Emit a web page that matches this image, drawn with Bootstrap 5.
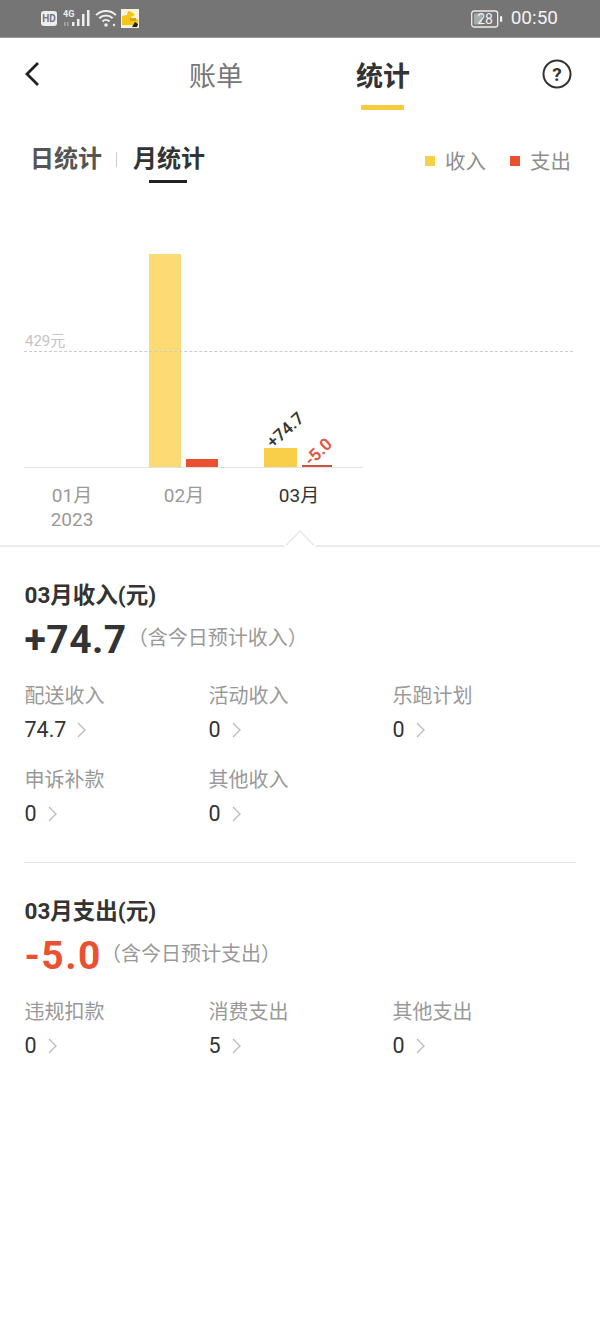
<!DOCTYPE html>
<html>
<head>
<meta charset="utf-8">
<title>统计</title>
<link href="https://cdn.jsdelivr.net/npm/bootstrap@5.3.2/dist/css/bootstrap.min.css" rel="stylesheet" />
<script src="https://cdn.jsdelivr.net/npm/bootstrap@5.3.2/dist/js/bootstrap.bundle.min.js"></script>
<style>
  body{
    font-family: Roboto, "Noto Sans CJK SC", sans-serif;
    color: #333;
    background: #fff;
  }
  .phone-bar{
    height: 38px;
    background: #757575;
    border-bottom: 1px solid #9a9a9a;
    padding: 0 42px 0 41px;
    color: #f2f2f2;
  }
  .hd-tag{
    width: 16px;
    height: 15px;
    background: #eee;
    color: #757575;
    border-radius: 3px;
    font-size: 10px;
    font-weight: 700;
    line-height: 15px;
    text-align: center;
  }
  .clock{
    font-size: 19px;
    margin-left: 8px;
  }
  .top-nav{
    height: 75px;
    padding: 0 28px 4px 24px;
  }
  .top-tabs{
    left: 189px;
    top: 20px;
    gap: 112px;
  }
  .top-tab{
    font-size: 27px;
    line-height: 38px;
    color: #777;
    width: 55px;
    white-space: nowrap;
  }
  .top-tab.is-on{
    color: #333;
    font-weight: 700;
  }
  .top-tab.is-on::after{
    content: "";
    display: block;
    width: 43px;
    height: 5px;
    margin: 9px 0 0 5px;
    background: #f8cb3e;
  }
  .sub-bar{
    height: 107px;
    padding: 30px 29px 0 30px;
  }
  .sub-tab{
    font-size: 24px;
    line-height: 32px;
    font-weight: 700;
    color: #555;
    white-space: nowrap;
  }
  .sub-tab.is-on{
    color: #333;
  }
  .sub-tab.is-on::after{
    content: "";
    display: block;
    width: 38px;
    height: 3px;
    margin: 5px 0 0 16px;
    background: #222;
  }
  .sub-sep{
    width: 1px;
    height: 15px;
    background: #ccc;
    margin: 9px 16px 0 14px;
  }
  .legend-wrap{
    padding-top: 4px;
    gap: 24px;
  }
  .legend-text{
    font-size: 20.5px;
    line-height: 30px;
    color: #8e8e8e;
  }
  .legend-dot{
    width: 10px;
    height: 10px;
    margin-right: 10px;
    margin-top: -3px;
  }
  .bg-income{ background: #f9cf4a; }
  .bg-expense{ background: #ea5130; }
  .chart-box{
    height: 327px;
    border-bottom: 2px solid #ececec;
  }
  .limit-line{
    left: 24px;
    right: 27px;
    top: 131px;
    border-top: 1px dashed #ccc;
  }
  .limit-label{
    left: 25px;
    top: 111px;
    font-size: 15px;
    line-height: 20px;
    color: #c4c4c4;
    background: #fff;
  }
  .plot{
    margin-left: 24px;
    width: 339px;
    height: 248px;
    border-bottom: 1px solid #e2e2e2;
    padding-left: 125px;
  }
  .bar-pair{
    width: 115px;
    flex: none;
    gap: 5px;
    height: 100%;
  }
  .bar-pair-wide{
    width: 68px;
  }
  .chart-bar{
    width: 32px;
    flex: none;
  }
  .bar-narrow{ width: 30px; }
  .bar-wide{ width: 33px; }
  .bar-pale{ background: #fddb74; }
  .bar-thin{ background: #c9533f; }
  .bar-tilt{
    bottom: calc(100% - 3px);
    left: 11px;
    font-weight: 500;
    font-size: 17px;
    line-height: 18px;
    color: #333;
    white-space: nowrap;
    transform: rotate(-42deg);
    transform-origin: left bottom;
  }
  .bar-tilt.red-tilt{
    left: 11px;
    bottom: -2px;
    font-weight: 700;
    color: #df5a48;
    transform: rotate(-44deg);
  }
  .month-row{
    margin-left: 16px;
    padding-top: 16px;
  }
  .month-cell{
    width: 112px;
    font-size: 19px;
    line-height: 24px;
    color: #999;
    text-align: center;
  }
  .month-cell.is-on{
    width: 118px;
    color: #333;
  }
  .chart-notch{
    left: 284px;
    bottom: -2px;
  }
  .stat-block{
    padding: 0 23.5px 0 24.5px;
  }
  .first-block{ padding-top: 34px; }
  .second-block{ padding-top: 34px; }
  .stat-title{
    font-size: 22.5px;
    line-height: 28px;
    font-weight: 700;
    color: #333;
  }
  .stat-big{
    font-size: 39px;
    line-height: 50px;
    font-weight: 700;
    letter-spacing: .5px;
    margin-top: 6px;
  }
  .stat-big.red-num{
    letter-spacing: 1.500px;
  }
  .stat-note{
    font-size: 20px;
    color: #999;
    margin-left: 1px;
    margin-top: 2px;
  }
  .red-num + .stat-note{
    margin-left: -1px;
  }
  .stat-grid{
    margin-top: 17px;
  }
  .item-label{
    font-size: 20px;
    line-height: 28px;
    color: #999;
  }
  .item-val{
    font-size: 21.5px;
    line-height: 30px;
    color: #333;
    margin-top: 5px;
    gap: 10px;
  }
  .stat-cell{
    height: 84px;
  }
  .red-num{ color: #ea5130; }
  .stat-rule{
    margin: 12px 24px 0;
    height: 1px;
    background: #e4e4e4;
  }
</style>
</head>
<body>
  <div class="phone-bar d-flex align-items-center justify-content-between">
    <div class="d-flex align-items-center gap-1">
      <div class="hd-tag">HD</div>
      <svg width="56" height="20" viewBox="0 0 56 20" fill="#eee">
        <text x="2" y="8" font-size="9" font-weight="700" font-family="Roboto">4G</text>
        <rect x="3" y="13" width="1.500" height="4" fill="#aaa"/><rect x="6" y="13" width="1.500" height="4" fill="#aaa"/>
        <rect x="11" y="13" width="2.500" height="4"/><rect x="16" y="10" width="2.500" height="7"/><rect x="21" y="5" width="2.500" height="12"/><rect x="26" y="1" width="2.500" height="16"/>
        <path d="M35.100 6.100A14 14 0 0 1 54.900 6.100M38.300 9.300A9.500 9.500 0 0 1 51.700 9.300M41.500 12.500A5 5 0 0 1 48.500 12.500" fill="none" stroke="#eee" stroke-width="2"/>
        <circle cx="45" cy="16" r="1.800"/>
        <circle cx="53" cy="16" r="1.200"/>
      </svg>
      <svg width="18" height="19" viewBox="0 0 18 19">
        <rect width="18" height="19" fill="#f7f3dc"/>
        <path d="M1 7l5-1 1-4 4 1 3 3-4 2 1 2h6v6H1z" fill="#f5c518"/>
        <path d="M9 9h6v3H9z" fill="#d9a514"/>
        <path d="M11 18l3-5 3 2-1 3z" fill="#222"/>
      </svg>
    </div>
    <div class="d-flex align-items-center">
      <svg width="32" height="18" viewBox="0 0 32 18">
        <rect x=".7" y="1" width="26" height="16" rx="2.500" fill="none" stroke="#eee" stroke-width="1.300"/>
        <rect x="3" y="3.500" width="8" height="11" fill="#aaa"/>
        <rect x="29" y="6" width="2.200" height="6" rx="1" fill="#eee"/>
        <text x="14" y="14" text-anchor="middle" font-size="14" fill="#f2f2f2" font-family="Roboto">28</text>
      </svg>
      <span class="clock">00:50</span>
    </div>
  </div>

  <div class="top-nav position-relative d-flex align-items-center justify-content-between">
    <svg width="16" height="26" viewBox="0 0 16 26"><path d="M14 2L3 13l11 11" fill="none" stroke="#222" stroke-width="2.800"/></svg>
    <div class="top-tabs position-absolute d-flex">
      <div class="top-tab">账单</div>
      <div class="top-tab is-on">统计</div>
    </div>
    <svg width="30" height="30" viewBox="0 0 30 30">
      <circle cx="15" cy="15" r="13.500" fill="none" stroke="#333" stroke-width="2"/>
      <text x="15" y="21.500" text-anchor="middle" font-size="19" font-weight="700" fill="#333" font-family="Roboto">?</text>
    </svg>
  </div>

  <div class="sub-bar d-flex justify-content-between">
    <div class="d-flex align-items-start">
      <div class="sub-tab">日统计</div>
      <div class="sub-sep"></div>
      <div class="sub-tab is-on">月统计</div>
    </div>
    <div class="legend-wrap d-flex align-items-start">
      <div class="legend-text d-flex align-items-center"><span class="legend-dot bg-income"></span>收入</div>
      <div class="legend-text d-flex align-items-center"><span class="legend-dot bg-expense"></span>支出</div>
    </div>
  </div>

  <div class="chart-box position-relative">
    <div class="limit-label position-absolute">429元</div>
    <div class="limit-line position-absolute"></div>
    <div class="plot d-flex align-items-end">
      <div class="bar-pair d-flex align-items-end">
        <div class="chart-bar bar-pale" style="height:213px"></div>
        <div class="chart-bar bg-expense" style="height:8px"></div>
      </div>
      <div class="bar-pair bar-pair-wide d-flex align-items-end">
        <div class="chart-bar bar-wide bg-income position-relative" style="height:19px">
          <div class="bar-tilt position-absolute">+74.7</div>
        </div>
        <div class="chart-bar bar-narrow bar-thin position-relative" style="height:2px">
          <div class="bar-tilt red-tilt position-absolute">-5.0</div>
        </div>
      </div>
    </div>
    <div class="month-row d-flex">
      <div class="month-cell">01月<br>2023</div>
      <div class="month-cell">02月</div>
      <div class="month-cell is-on">03月</div>
    </div>
    <svg class="chart-notch position-absolute" width="32" height="17" viewBox="0 0 32 17"><path d="M0 15.500h2L16 1l14 14.500h2v2H0z" fill="#fff"/><path d="M2 15.500L16 1l14 14.500" fill="none" stroke="#e8e8e8" stroke-width="1.500"/></svg>
  </div>

  <div class="stat-block first-block">
    <div class="stat-title">03月收入(元)</div>
    <div class="d-flex align-items-center">
      <span class="stat-big">+74.7</span>
      <span class="stat-note">（含今日预计收入）</span>
    </div>
    <div class="row g-0 stat-grid">
      <div class="col-4 stat-cell"><div class="item-label">配送收入</div><div class="item-val d-flex align-items-center">74.7<svg width="10" height="16" viewBox="0 0 10 16"><path d="M2 1l7 7-7 7" fill="none" stroke="#bbb" stroke-width="1.300"/></svg></div></div>
      <div class="col-4 stat-cell"><div class="item-label">活动收入</div><div class="item-val d-flex align-items-center">0<svg width="10" height="16" viewBox="0 0 10 16"><path d="M2 1l7 7-7 7" fill="none" stroke="#bbb" stroke-width="1.300"/></svg></div></div>
      <div class="col-4 stat-cell"><div class="item-label">乐跑计划</div><div class="item-val d-flex align-items-center">0<svg width="10" height="16" viewBox="0 0 10 16"><path d="M2 1l7 7-7 7" fill="none" stroke="#bbb" stroke-width="1.300"/></svg></div></div>
      <div class="col-4 stat-cell"><div class="item-label">申诉补款</div><div class="item-val d-flex align-items-center">0<svg width="10" height="16" viewBox="0 0 10 16"><path d="M2 1l7 7-7 7" fill="none" stroke="#bbb" stroke-width="1.300"/></svg></div></div>
      <div class="col-4 stat-cell"><div class="item-label">其他收入</div><div class="item-val d-flex align-items-center">0<svg width="10" height="16" viewBox="0 0 10 16"><path d="M2 1l7 7-7 7" fill="none" stroke="#bbb" stroke-width="1.300"/></svg></div></div>
    </div>
  </div>

  <div class="stat-rule"></div>

  <div class="stat-block second-block">
    <div class="stat-title">03月支出(元)</div>
    <div class="d-flex align-items-center">
      <span class="stat-big red-num">-5.0</span>
      <span class="stat-note">（含今日预计支出）</span>
    </div>
    <div class="row g-0 stat-grid">
      <div class="col-4 stat-cell"><div class="item-label">违规扣款</div><div class="item-val d-flex align-items-center">0<svg width="10" height="16" viewBox="0 0 10 16"><path d="M2 1l7 7-7 7" fill="none" stroke="#bbb" stroke-width="1.300"/></svg></div></div>
      <div class="col-4 stat-cell"><div class="item-label">消费支出</div><div class="item-val d-flex align-items-center">5<svg width="10" height="16" viewBox="0 0 10 16"><path d="M2 1l7 7-7 7" fill="none" stroke="#bbb" stroke-width="1.300"/></svg></div></div>
      <div class="col-4 stat-cell"><div class="item-label">其他支出</div><div class="item-val d-flex align-items-center">0<svg width="10" height="16" viewBox="0 0 10 16"><path d="M2 1l7 7-7 7" fill="none" stroke="#bbb" stroke-width="1.300"/></svg></div></div>
    </div>
  </div>
</body>
</html>
